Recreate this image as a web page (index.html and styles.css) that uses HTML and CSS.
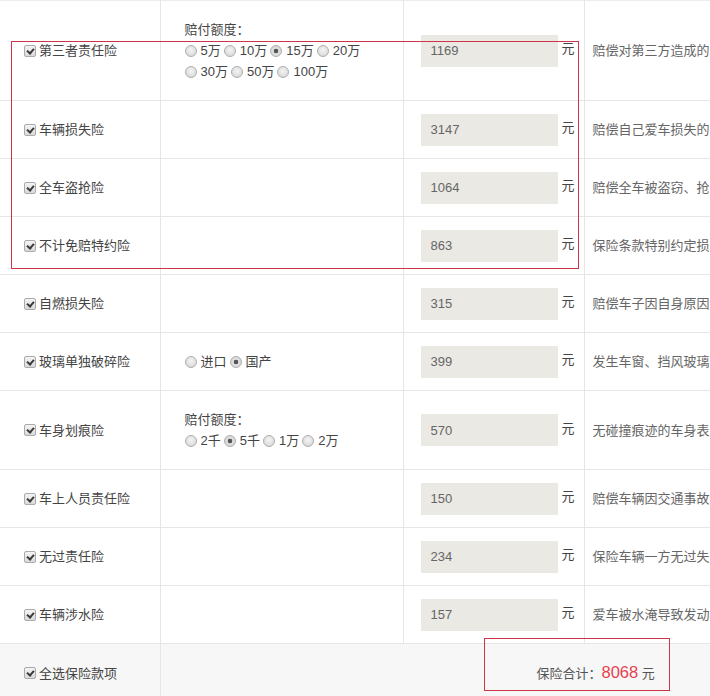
FILE: index.html
```html
<!DOCTYPE html>
<html lang="zh-CN">
<head>
    <meta charset="UTF-8">
    <title>车险报价</title>
    <link rel="stylesheet" href="styles.css">
</head>
<body>

<div class="page">
    <table class="ins-table">
        <colgroup>
            <col class="c-name">
            <col class="c-opt">
            <col class="c-price">
            <col class="c-desc">
        </colgroup>

        <!-- 第三者责任险 -->
        <tr>
            <td class="name"><label><input class="chk" type="checkbox" checked>第三者责任险</label></td>
            <td class="opt">
                <div>赔付额度：</div>
                <div class="radios">
                    <label><input class="rd" type="radio" name="szx">5万</label>
                    <label><input class="rd" type="radio" name="szx">10万</label>
                    <label><input class="rd" type="radio" name="szx" checked>15万</label>
                    <label><input class="rd" type="radio" name="szx">20万</label>
                </div>
                <div class="radios">
                    <label><input class="rd" type="radio" name="szx">30万</label>
                    <label><input class="rd" type="radio" name="szx">50万</label>
                    <label><input class="rd" type="radio" name="szx">100万</label>
                </div>
            </td>
            <td class="price"><div class="price-box"><input type="text" value="1169" readonly><span>元</span></div></td>
            <td class="desc">赔偿对第三方造成的人身伤亡和财产损失</td>
        </tr>

        <tr>
            <td class="name"><label><input class="chk" type="checkbox" checked>车辆损失险</label></td>
            <td class="opt"></td>
            <td class="price"><div class="price-box"><input type="text" value="3147" readonly><span>元</span></div></td>
            <td class="desc">赔偿自己爱车损失的费用</td>
        </tr>

        <tr>
            <td class="name"><label><input class="chk" type="checkbox" checked>全车盗抢险</label></td>
            <td class="opt"></td>
            <td class="price"><div class="price-box"><input type="text" value="1064" readonly><span>元</span></div></td>
            <td class="desc">赔偿全车被盗窃、抢劫、抢夺造成的损失</td>
        </tr>

        <tr>
            <td class="name"><label><input class="chk" type="checkbox" checked>不计免赔特约险</label></td>
            <td class="opt"></td>
            <td class="price"><div class="price-box"><input type="text" value="863" readonly><span>元</span></div></td>
            <td class="desc">保险条款特别约定损失由保险公司全额赔付</td>
        </tr>

        <tr>
            <td class="name"><label><input class="chk" type="checkbox" checked>自燃损失险</label></td>
            <td class="opt"></td>
            <td class="price"><div class="price-box"><input type="text" value="315" readonly><span>元</span></div></td>
            <td class="desc">赔偿车子因自身原因引起火灾造成的损失</td>
        </tr>

        <tr>
            <td class="name"><label><input class="chk" type="checkbox" checked>玻璃单独破碎险</label></td>
            <td class="opt">
                <div class="radios">
                    <label><input class="rd" type="radio" name="bl">进口</label>
                    <label><input class="rd" type="radio" name="bl" checked>国产</label>
                </div>
            </td>
            <td class="price"><div class="price-box"><input type="text" value="399" readonly><span>元</span></div></td>
            <td class="desc">发生车窗、挡风玻璃的单独破碎</td>
        </tr>

        <tr>
            <td class="name"><label><input class="chk" type="checkbox" checked>车身划痕险</label></td>
            <td class="opt">
                <div>赔付额度：</div>
                <div class="radios">
                    <label><input class="rd" type="radio" name="hh">2千</label>
                    <label><input class="rd" type="radio" name="hh" checked>5千</label>
                    <label><input class="rd" type="radio" name="hh">1万</label>
                    <label><input class="rd" type="radio" name="hh">2万</label>
                </div>
            </td>
            <td class="price"><div class="price-box"><input type="text" value="570" readonly><span>元</span></div></td>
            <td class="desc">无碰撞痕迹的车身表面油漆单独划伤</td>
        </tr>

        <tr>
            <td class="name"><label><input class="chk" type="checkbox" checked>车上人员责任险</label></td>
            <td class="opt"></td>
            <td class="price"><div class="price-box"><input type="text" value="150" readonly><span>元</span></div></td>
            <td class="desc">赔偿车辆因交通事故造成的车上人员伤亡</td>
        </tr>

        <tr>
            <td class="name"><label><input class="chk" type="checkbox" checked>无过责任险</label></td>
            <td class="opt"></td>
            <td class="price"><div class="price-box"><input type="text" value="234" readonly><span>元</span></div></td>
            <td class="desc">保险车辆一方无过失，对方的损失</td>
        </tr>

        <tr>
            <td class="name"><label><input class="chk" type="checkbox" checked>车辆涉水险</label></td>
            <td class="opt"></td>
            <td class="price"><div class="price-box"><input type="text" value="157" readonly><span>元</span></div></td>
            <td class="desc">爱车被水淹导致发动机损坏的费用</td>
        </tr>

        <!-- 合计 -->
        <tr class="total-row">
            <td class="name"><label><input class="chk" type="checkbox" checked>全选保险款项</label></td>
            <td class="total" colspan="3">保险合计：<em>8068</em> 元</td>
        </tr>
    </table>

    <!-- 红色标注框 -->
    <div class="mark mark-main"></div>
    <div class="mark mark-total"></div>
</div>

</body>
</html>
```

FILE: styles.css
```css
/* Global */
body {
    margin: 0;
    font-family: "Liberation Sans", "Noto Sans CJK SC", sans-serif;
    font-size: 13px;
    color: #555;
    background: #fff;
    overflow: hidden;
}
.page {
    position: relative;
    width: 710px;
    height: 696px;
    overflow: hidden;
}

/* Table */
.ins-table {
    border-collapse: collapse;
    table-layout: fixed;
    width: 984px;
}
.c-name { width: 160px; }
.c-opt { width: 243px; }
.c-price { width: 181px; }
.c-desc { width: 400px; }

.ins-table td {
    border-bottom: 1px solid #e6e6e6;
    border-right: 1px solid #e6e6e6;
    padding: 18px 0;
    line-height: 21px;
    vertical-align: middle;
    white-space: nowrap;
}
.ins-table tr:first-child td {
    border-top: 1px solid #ececec;
}
.ins-table td.name {
    padding-left: 24px;
    color: #444;
}
.ins-table td.opt {
    padding-left: 24px;
    color: #444;
}
.ins-table td.price {
    padding: 12px 0 12px 17px;
}
.ins-table td.desc {
    padding-left: 8px;
    color: #666;
}

label {
    display: flex;
    align-items: center;
    height: 21px;
}

/* Checkbox */
.chk {
    -webkit-appearance: none;
    appearance: none;
    box-sizing: border-box;
    position: relative;
    width: 12px;
    height: 12px;
    margin: 0 3px 0 0;
    border: 1px solid #ababab;
    border-radius: 2px;
    background: linear-gradient(#f4f4f4, #dadada);
}
.chk:checked::after {
    content: "";
    position: absolute;
    left: 3px;
    top: 1px;
    width: 3px;
    height: 5px;
    border: solid #3a3a3a;
    border-width: 0 2px 2px 0;
    transform: rotate(40deg);
}

/* Radio */
.radios {
    display: flex;
    align-items: center;
    height: 21px;
}
.radios label {
    margin-right: 3px;
}
.rd {
    -webkit-appearance: none;
    appearance: none;
    box-sizing: border-box;
    width: 12px;
    height: 12px;
    margin: 0 4px 0 0;
    border: 1px solid #b0b0b0;
    border-radius: 50%;
    background: radial-gradient(circle at 50% 40%, #f4f4f4, #d2d2d2);
}
.rd:checked {
    background: radial-gradient(circle, #555 0, #555 2px, #e0e0e0 2.6px, #cfcfcf 100%);
}

/* Price */
.price-box {
    display: flex;
    align-items: center;
}
.price-box input {
    box-sizing: border-box;
    width: 137px;
    height: 32px;
    margin: 0;
    padding: 0 0 0 10px;
    border: none;
    background: #ebe9e3;
    color: #666;
    font-family: inherit;
    font-size: 13px;
    outline: none;
}
.price-box span {
    margin-left: 4px;
    margin-top: -4px;
    color: #444;
}

/* Total */
.total-row td {
    background: #f7f7f7;
}
.ins-table td.total {
    border-right: none;
    padding-left: 376px;
    color: #555;
}
.total em {
    font-style: normal;
    font-size: 16.5px;
    color: #e8404f;
}

/* Red annotation boxes */
.mark {
    position: absolute;
    box-sizing: border-box;
    border: 1px solid #cd3447;
}
.mark-main {
    left: 11px;
    top: 41px;
    width: 568px;
    height: 228px;
}
.mark-total {
    left: 484px;
    top: 638px;
    width: 186px;
    height: 53px;
}
```
